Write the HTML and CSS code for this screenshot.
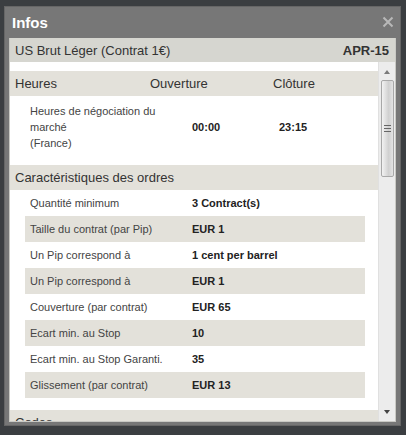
FILE: index.html
```html
<!DOCTYPE html>
<html lang="fr">
<head>
<meta charset="utf-8">
<title>Infos</title>
<link rel="stylesheet" href="styles.css">
</head>
<body>
<div class="dialog">
  <div class="titlebar">
    <span class="title">Infos</span>
    <svg class="close" width="12" height="12" viewBox="0 0 12 12"><path d="M1.5 1.5 L10.5 10.5 M10.5 1.5 L1.5 10.5" stroke="#b8b8b8" stroke-width="2" fill="none"/></svg>
  </div>
  <div class="panel">
    <div class="panel-head">
      <span>US Brut Léger (Contrat 1€)</span>
      <span class="code">APR-15</span>
    </div>
    <div class="body">
      <div class="scroll">
        <div class="band hours-head">
          <span>Heures</span><span>Ouverture</span><span>Clôture</span>
        </div>
        <div class="hours-row">
          <span class="hours-label">Heures de négociation du marché<br>(France)</span>
          <span class="val">00:00</span>
          <span class="val">23:15</span>
        </div>
        <div class="band">Caractéristiques des ordres</div>
        <div class="rows">
          <div class="row"><span class="lbl">Quantité minimum</span><span class="val">3 Contract(s)</span></div>
          <div class="row alt"><span class="lbl">Taille du contrat (par Pip)</span><span class="val">EUR 1</span></div>
          <div class="row"><span class="lbl">Un Pip correspond à</span><span class="val">1 cent per barrel</span></div>
          <div class="row alt"><span class="lbl">Un Pip correspond à</span><span class="val">EUR 1</span></div>
          <div class="row"><span class="lbl">Couverture (par contrat)</span><span class="val">EUR 65</span></div>
          <div class="row alt"><span class="lbl">Ecart min. au Stop</span><span class="val">10</span></div>
          <div class="row"><span class="lbl">Ecart min. au Stop Garanti.</span><span class="val">35</span></div>
          <div class="row alt"><span class="lbl">Glissement (par contrat)</span><span class="val">EUR 13</span></div>
        </div>
        <div class="band codes">Codes</div>
      </div>
      <div class="scrollbar">
        <div class="arrow up"></div>
        <div class="thumb"><span class="grip"></span></div>
        <div class="track"></div>
        <div class="arrow down"></div>
      </div>
    </div>
  </div>
</div>
</body>
</html>
```
FILE: styles.css
```css
* { box-sizing: border-box; }
html, body { margin: 0; padding: 0; }
body {
  background: #3b3e41;
  font-family: "Liberation Sans", Arial, sans-serif;
  width: 406px;
  height: 435px;
  overflow: hidden;
}
.dialog {
  margin: 6px 0 0 4px;
  width: 397px;
  height: 420px;
  background: #777777;
  border: 1px solid #666;
  padding: 0 4px 3px 4px;
  display: flex;
  flex-direction: column;
}
.titlebar {
  height: 31px;
  display: flex;
  align-items: center;
  justify-content: space-between;
  padding: 0 2px 1px 3px;
}
.title {
  color: #fff;
  font-weight: bold;
  font-size: 15px;
}
.close { display: block; }
.panel {
  flex: 1;
  border: 1px solid #c9c9c4;
  border-top: none;
  background: #fff;
  display: flex;
  flex-direction: column;
  min-height: 0;
}
.panel-head {
  height: 24px;
  background: #d6d6d0;
  display: flex;
  align-items: center;
  justify-content: space-between;
  padding: 0 6px 0 5px;
  font-size: 13px;
  color: #333;
}
.panel-head .code { font-weight: bold; }
.body {
  flex: 1;
  display: flex;
  min-height: 0;
}
.scroll {
  width: 368px;
  overflow: hidden;
  padding-top: 9px;
}
.band {
  height: 25px;
  line-height: 25px;
  background: #e3e1da;
  font-size: 13px;
  color: #333;
  padding-left: 5px;
}
.hours-head {
  display: grid;
  grid-template-columns: 135px 123px 1fr;
}
.hours-row {
  height: 69px;
  display: grid;
  grid-template-columns: 162px 87px 1fr;
  align-items: center;
  padding: 0 0 8px 20px;
  font-size: 11px;
}
.hours-label {
  color: #444;
  line-height: 16px;
  width: 135px;
}
.val { font-weight: bold; color: #222; font-size: 11px; }
.rows {
  margin: 0 13px 12px 15px;
}
.row {
  height: 26px;
  display: grid;
  grid-template-columns: 162px 1fr;
  align-items: center;
  padding-left: 5px;
  font-size: 11px;
}
.row.alt { background: #e3e1da; }
.lbl { color: #444; }
.scrollbar {
  width: 17px;
  background: #ececec;
  border-left: 1px solid #e0e0e0;
  display: flex;
  flex-direction: column;
  align-items: center;
}
.arrow {
  width: 17px;
  height: 18px;
  position: relative;
}
.arrow::after {
  content: "";
  position: absolute;
  left: 5px;
  width: 0; height: 0;
  border-left: 3.5px solid transparent;
  border-right: 3.5px solid transparent;
}
.arrow.up::after { top: 8px; border-bottom: 4px solid #7a7a7a; }
.arrow.down::after { top: 7px; border-top: 4px solid #444; }
.thumb {
  width: 13px;
  height: 97px;
  border: 1px solid #a8a8a8;
  border-radius: 2px;
  background: linear-gradient(to right, #f2f2f2, #d9d9d9 45%, #d0d0d0 60%, #e4e4e4);
  display: flex;
  align-items: center;
  justify-content: center;
}
.grip {
  width: 7px;
  height: 7px;
  border-top: 1px solid #666;
  border-bottom: 1px solid #666;
  position: relative;
}
.grip::after {
  content: "";
  position: absolute;
  left: 0; right: 0;
  top: 2px;
  border-top: 1px solid #666;
}
.track { flex: 1; }
```
